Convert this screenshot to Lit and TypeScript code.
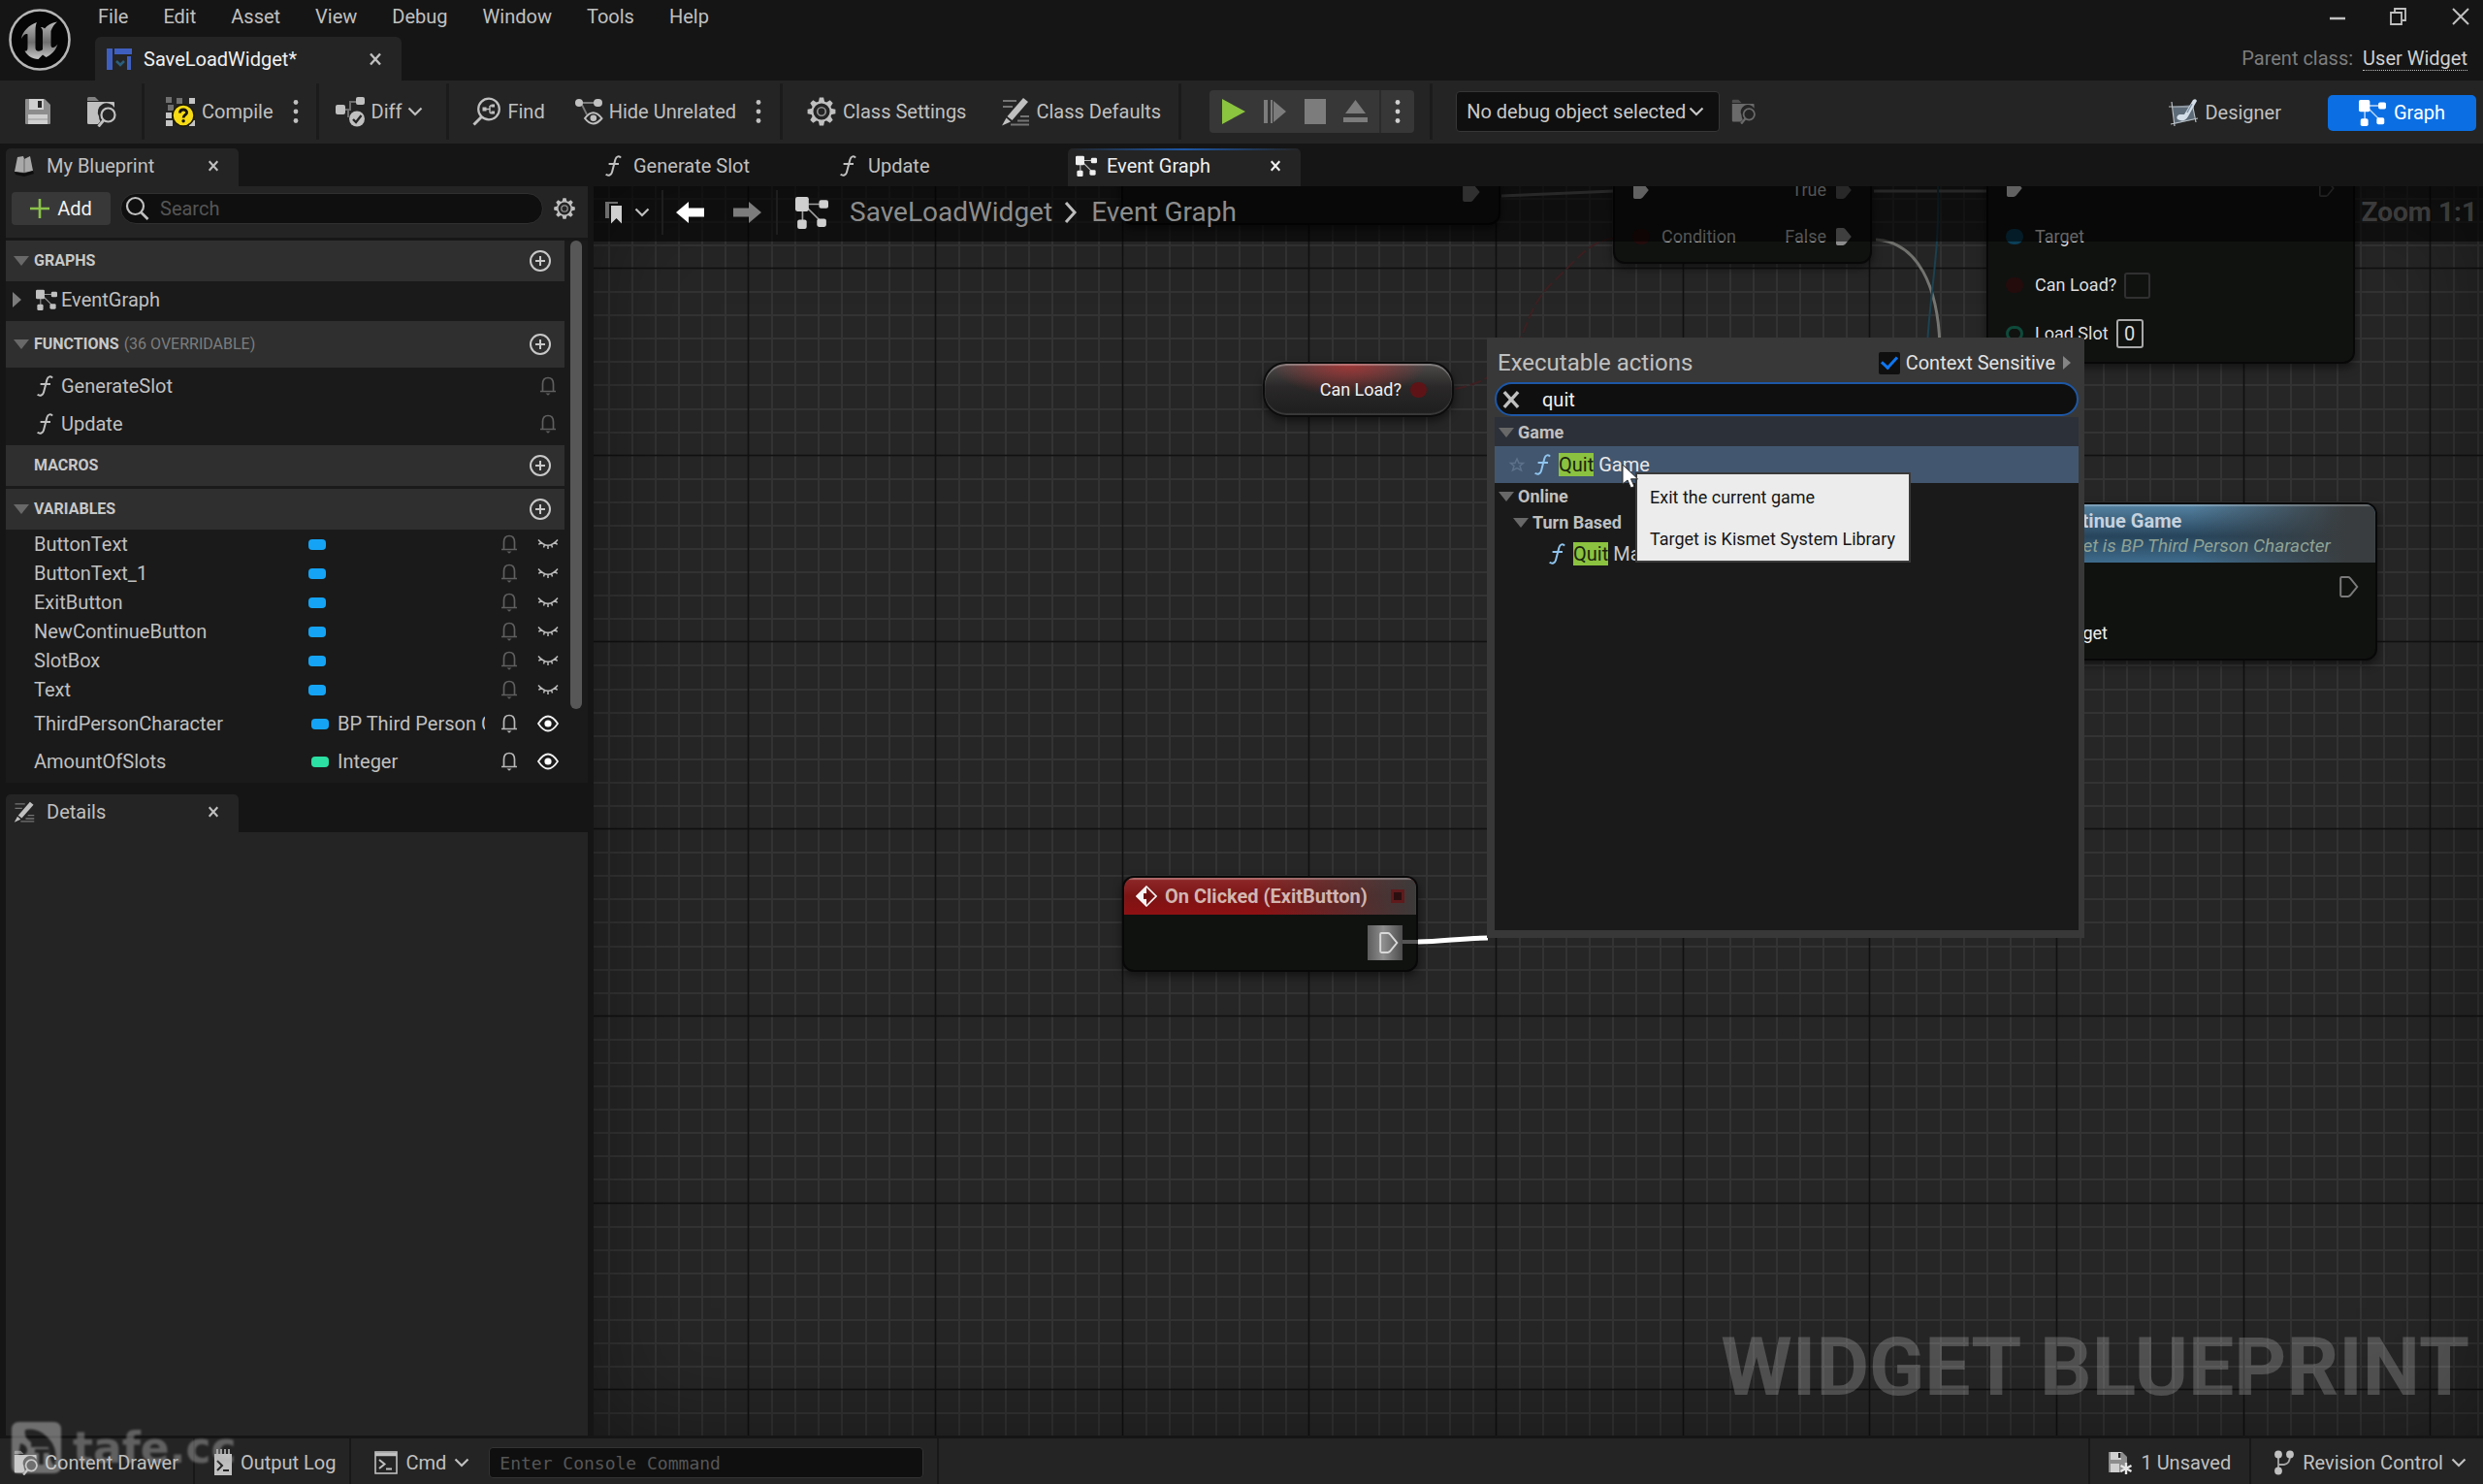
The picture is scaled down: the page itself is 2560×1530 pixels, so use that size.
import { LitElement, html, css, svg, nothing } from "lit";
import { customElement } from "lit/decorators.js";

/* ---------- icons ---------- */
const icon = (w: number, h: number, box: string, body: unknown) =>
  html`<svg width=${w} height=${h} viewBox=${box} fill="none" aria-hidden="true">${body}</svg>`;

const close = (s = 14) =>
  icon(s, s, "0 0 14 14", svg`<path d="M2 1.5L12 12.5M12 1.5L2 12.5" stroke="currentColor" stroke-width="2.4"/>`);

const chevron = () =>
  icon(16, 10, "0 0 16 10", svg`<path d="M1.5 1.5L8 8L14.5 1.5" stroke="currentColor" stroke-width="2.2"/>`);

const dots = () =>
  icon(6, 26, "0 0 6 26", svg`<g fill="currentColor"><circle cx="3" cy="3.5" r="2.4"/><circle cx="3" cy="13" r="2.4"/><circle cx="3" cy="22.5" r="2.4"/></g>`);

const graphIcon = (s: number) =>
  icon(s, s, "0 0 32 32", svg`
    <path d="M8 8H26M7 8V27M8 8L26 26" stroke="currentColor" stroke-width="1.6" opacity=".75"/>
    <g fill="currentColor"><rect x="0" y="1" width="13" height="14" rx="2"/><rect x="23" y="4" width="9" height="8" rx="2"/>
    <rect x="2" y="23" width="9" height="9" rx="2"/><rect x="21" y="22" width="9" height="8" rx="2"/></g>`);

const fnIcon = () =>
  icon(18, 24, "0 0 18 24", svg`
    <path d="M17 3.6C15.6 1.4 12.4 1.8 11.4 5.6L8 18.4C7.2 21.4 4.4 22.8 1.6 20.8" stroke="currentColor" stroke-width="2"/>
    <path d="M4.6 10H15" stroke="currentColor" stroke-width="2"/>`);

const saveIcon = () =>
  icon(28, 28, "0 0 28 28", svg`
    <path d="M1 2Q1 1 2 1H21L27 7V26Q27 27 26 27H2Q1 27 1 26Z" fill="#8d8d8d"/>
    <path d="M5 1H20V12H5Z" fill="#cfcfcf"/><rect x="14" y="3" width="4" height="7" fill="#242424"/>
    <rect x="4" y="17" width="20" height="10" fill="#cfcfcf"/><path d="M4 22H24" stroke="#9a9a9a"/>`);

const browseIcon = (s: number) =>
  icon(s, s, "0 0 32 32", svg`
    <path d="M1 5V2.5Q1 1 2.500 1H9L13 5Z" fill="currentColor" opacity=".6"/>
    <path d="M1 6H28Q29 6 29 7V12A9 9 0 0 0 13 21Q13 24 14.500 26L12 29H2.500Q1 29 1 27.500Z" fill="currentColor"/>
    <circle cx="22.500" cy="19.500" r="7" stroke="currentColor" stroke-width="2.200"/>
    <path d="M17.800 25L12.500 31.500" stroke="currentColor" stroke-width="2.800"/>`);

const compileIcon = () =>
  icon(32, 32, "0 0 32 32", svg`
    <g fill="#c4c4c4"><rect x="25" y="2" width="6" height="6"/><rect x="1" y="17" width="6" height="6"/><rect x="1" y="25" width="7" height="6"/><rect x="25" y="25" width="6" height="6"/></g>
    <g fill="#6f6f6f"><rect x="1" y="1" width="6" height="6"/><rect x="12" y="2" width="6" height="6"/><rect x="3" y="9" width="6" height="6"/></g>
    <circle cx="19" cy="20" r="11" fill="#f7dc15" stroke="#1d1a05" stroke-width="1.500"/>
    <path d="M15.500 17.500C15.500 12.800 22.800 12.900 22.600 17.300C22.500 19.500 19.100 19.600 19.100 22.600" stroke="#17150a" stroke-width="2.800"/>
    <circle cx="19.100" cy="25.800" r="1.700" fill="#17150a"/>`);

const diffIcon = () =>
  icon(32, 32, "0 0 32 32", svg`
    <path d="M8 14H16V6H24M14 14V22" stroke="#6d6d6d" stroke-width="2"/>
    <g fill="currentColor"><rect x="1" y="9" width="10" height="10" rx="2"/><rect x="22" y="1" width="9" height="8" rx="2"/><circle cx="23" cy="23.500" r="8"/></g>
    <path d="M19 24L22 27L27.500 20" stroke="#242424" stroke-width="2.400"/>`);

const findIcon = () =>
  icon(30, 30, "0 0 30 30", svg`
    <circle cx="17" cy="12.500" r="10.800" stroke="currentColor" stroke-width="2.200"/>
    <path d="M9.500 20.500L1.500 28.500" stroke="currentColor" stroke-width="3"/>
    <path d="M14 12.500H18M18 9V16.500M18 9H21M18 16.500H21" stroke="currentColor" stroke-width="1.400"/>
    <g fill="currentColor"><rect x="10.500" y="10.500" width="4" height="4"/><rect x="19.500" y="7.500" width="3.500" height="3"/><rect x="19.500" y="14.500" width="3.500" height="3"/></g>`);

const hideIcon = () =>
  icon(30, 30, "0 0 30 30", svg`
    <path d="M5 6H24M8 8L13 18" stroke="#7b7b7b" stroke-width="1.800"/>
    <rect x="1" y="2" width="8" height="8" rx="4" fill="currentColor"/><rect x="20" y="2" width="9" height="8" rx="4" fill="currentColor"/>
    <path d="M11 22Q19.500 10.500 28.500 22Q19.500 33 11 22Z" stroke="currentColor" stroke-width="2"/><circle cx="19.800" cy="21.700" r="3.300" fill="currentColor"/>`);

const gearIcon = (s: number) =>
  icon(s, s, "0 0 30 30", svg`
    ${[0, 45, 90, 135, 180, 225, 270, 315].map(a => svg`<path d="M13 1.500H17L18 6H12Z" fill="currentColor" transform=${`rotate(${a} 15 15)`}/>`)}
    <circle cx="15" cy="15" r="9" stroke="currentColor" stroke-width="2"/><circle cx="15" cy="15" r="4" stroke="currentColor" stroke-width="1.600" opacity=".7"/>`);

const pencilIcon = (s: number) =>
  icon(s, s, "0 0 30 30", svg`
    <path d="M2 4H16M2 10H12M20 20H29M17 24.500H29M10 28.500H29" stroke="#747474" stroke-width="1.800"/>
    <path d="M23 1L28 5L11.500 24L6.500 20Z" fill="currentColor"/><path d="M5.500 21.500L10 25.500L1 29.500Z" fill="currentColor"/>`);

const designerIcon = () =>
  icon(32, 30, "0 0 32 30", svg`
    <path d="M5 9L25 7L28 22L7 27Z" fill="#5d6b78"/><path d="M1 9H27M4 4L7 29M25 5L29 25M3 27L31 21" stroke="#b9c0c6" stroke-width="1.200"/>
    <path d="M17 17L26 2Q29 0 30 3L21 19Q17 26 10 22Q8 19 12 17Z" fill="#d3dee8"/><path d="M25 6L20 15" stroke="#8295a8" stroke-width="1.500"/>`);

const bookIcon = () =>
  icon(22, 24, "0 0 22 24", svg`
    <path d="M1 18L4 3L10 2L11 5L17 2L20 17L11 19Z" fill="#a9a9a9"/><path d="M11 5V19" stroke="#666"/>
    <path d="M1 18L11 20L20 17L21 20L11 23L2 21Z" fill="#0d0d0d"/>`);

const searchIcon = () =>
  icon(26, 26, "0 0 26 26", svg`<circle cx="10.500" cy="10.500" r="8.500" stroke="currentColor" stroke-width="2.200"/><path d="M16.500 17L23.500 24" stroke="currentColor" stroke-width="2.600"/>`);

const addIcon = () =>
  icon(20, 20, "0 0 20 20", svg`<path d="M10 0V20M0 10H20" stroke="#8bc24a" stroke-width="2.600"/>`);

const plusCircle = () =>
  icon(24, 24, "0 0 24 24", svg`<circle cx="12" cy="12" r="10" stroke="currentColor" stroke-width="2"/><path d="M12 7V17M7 12H17" stroke="currentColor" stroke-width="2"/>`);

const triDown = () => icon(16, 12, "0 0 16 12", svg`<path d="M0 1H16L8 11Z" fill="#686868"/>`);
const triRight = () => icon(10, 16, "0 0 10 16", svg`<path d="M0 0L9 8L0 16Z" fill="#7c7c7c"/>`);

const bell = () =>
  icon(18, 20, "0 0 18 20", svg`<path d="M1 15.500H17M3.500 15V8Q3.500 1.500 9 1.500T14.500 8V15" stroke="currentColor" stroke-width="1.700"/><path d="M6.500 17.500H11.500L9 19.800Z" fill="currentColor"/>`);

const eyeOpen = () =>
  icon(22, 18, "0 0 22 18", svg`<path d="M1 9Q11 -6 21 9Q11 24 1 9Z" stroke="#f2f2f2" stroke-width="1.800"/><circle cx="11" cy="9" r="3.600" fill="#fff"/>`);

const eyeShut = () =>
  icon(22, 12, "0 0 22 12", svg`<path d="M1 1.500Q11 13 21 1.500M3.500 4L1.500 6.500M7.500 6.500L6.500 9.500M11 7.500V11M14.500 6.500L15.500 9.500M18.500 4L20.500 6.500" stroke="#bdbdbd" stroke-width="1.500"/>`);

const bookmarkIcon = () =>
  icon(18, 24, "0 0 18 24", svg`<path d="M0 18V1H13V3H4V18Z" fill="#6d6d6d"/><path d="M6 5H17V23.500L11.500 18L6 23.500Z" fill="#cfcfcf"/>`);

const arrow = (flip: boolean) =>
  icon(30, 22, "0 0 30 22", svg`<path transform=${flip ? "translate(30 0) scale(-1 1)" : ""} d="M0 11L13 0V6.500H29V15.500H13V22Z" fill="currentColor"/>`);

const crumbSep = () => icon(14, 22, "0 0 14 22", svg`<path d="M2 1L11 11L2 21" stroke="#bdbdbd" stroke-width="3"/>`);

const execPin = (filled: boolean, color: string, s = 18) =>
  icon(s, s, "0 0 18 20", svg`<path d="M2 1H8Q9 1 10 2L16.500 10L10 18Q9 19 8 19H2Q1 19 1 18V2Q1 1 2 1Z" fill=${filled ? color : "none"} stroke=${color} stroke-width="1.800"/>`);

const logIcon = () =>
  icon(20, 28, "0 0 20 28", svg`<path d="M1 5H19V27H1Z" fill="currentColor"/><path d="M4 0V6M8 0V6M12 0V6M16 0V6" stroke="currentColor" stroke-width="1.600"/><path d="M4 12L9 17L4 22M10 22H16" stroke="#242424" stroke-width="2"/>`);

const cmdIcon = () =>
  icon(24, 24, "0 0 24 24", svg`<rect x="1" y="1" width="22" height="22" stroke="currentColor" stroke-width="1.600"/><path d="M1 3.500H23" stroke="currentColor" stroke-width="3.500"/><path d="M5 9L10.500 13.500L5 18M12 18.500H18" stroke="currentColor" stroke-width="2"/>`);

const unsavedIcon = () =>
  icon(26, 26, "0 0 26 26", svg`
    <path d="M1 2H15L20 7V16L14 23H1Z" fill="#8d8d8d"/><rect x="3" y="2" width="11" height="8" fill="#d0d0d0"/><rect x="11" y="3" width="2.500" height="5" fill="#242424"/><rect x="3" y="14" width="9" height="9" fill="#d0d0d0"/>
    <path d="M19 13V25M13.500 16L24.500 22M24.500 16L13.500 22" stroke="#e6e6e6" stroke-width="2.400"/>`);

const branchIcon = () =>
  icon(22, 26, "0 0 22 26", svg`<path d="M5 5V22M5 15H11Q17 14 17 6" stroke="#a6a6a6" stroke-width="1.800"/><g fill="currentColor"><circle cx="5" cy="4.500" r="3.900"/><circle cx="17" cy="4.500" r="3.900"/><circle cx="5" cy="21.500" r="3.900"/></g>`);

const widgetIcon = () =>
  icon(26, 22, "0 0 26 22", svg`<g fill="#3f5fc0"><rect x="0" y="0" width="6" height="22"/><rect x="8" y="0" width="18" height="6"/><rect x="21" y="8" width="4" height="14"/></g><path d="M10 13L14 17L18 13" stroke="#2b5f7d" stroke-width="2.500"/>`);

const unrealLogo = () =>
  icon(66, 66, "0 0 66 66", svg`
    <defs><linearGradient id="ug" x1="0" y1="0" x2="0" y2="1"><stop offset="0" stop-color="#b8b8b8"/><stop offset=".55" stop-color="#6d6d6d"/><stop offset="1" stop-color="#c9c9c9"/></linearGradient></defs>
    <circle cx="33" cy="33" r="30.500" fill="#060606" stroke="#b5b5b5" stroke-width="2.600"/>
    <path fill="url(#ug)" d="M30 15C22 18 15 24 14 32C16 28 19 26 20.500 27.500V41C20.500 44 19.500 45 17.500 44.500C20 49.500 25 52.500 31.500 53L36 48.500L39.500 51C45 48.500 49.500 44 51.500 37.500C49.500 40 47.500 41.500 46 41C44.500 40.500 44.500 39 44.500 37.500V24C46 19.500 48.500 16.500 51 14.500C45 15.500 41 18 38 21.500C37 20.500 36 20 34 20C35.500 21.500 36 23 36 25V43C33.500 45.500 28.500 45.500 28.500 41.500V23.500C28.500 19.500 29 17 30 15Z"/>`);

/* ---------- data ---------- */
const MENUS = ["File", "Edit", "Asset", "View", "Debug", "Window", "Tools", "Help"];
const VARS = [
  { name: "ButtonText" }, { name: "ButtonText_1" }, { name: "ExitButton" },
  { name: "NewContinueButton" }, { name: "SlotBox" }, { name: "Text" },
  { name: "ThirdPersonCharacter", type: "BP Third Person Character", color: "#15a4f5" },
  { name: "AmountOfSlots", type: "Integer", color: "#2be0a2" },
];

/* ---------- shared styles ---------- */
const base = css`
  * { box-sizing: border-box; }
  :host { font: 20px/24px Roboto, "Liberation Sans", sans-serif; color: #c0c0c0; }
  button, input, select { font: inherit; color: inherit; background: none; border: 0; padding: 0; margin: 0; outline: 0; }
  button { display: inline-flex; align-items: center; white-space: nowrap; }
  svg { display: block; flex: none; }
  ul { list-style: none; margin: 0; padding: 0; }
`;

@customElement("top-bar")
class TopBar extends LitElement {
  static styles = [base, css`
    :host { display: block; }
    .title { display: flex; height: 83px; background: #151515; }
    .logo { width: 98px; padding: 8px; }
    .mid { flex: 1; display: flex; flex-direction: column; justify-content: space-between; }
    .menu { display: flex; gap: 36px; padding: 5px 3px; }
    .tab { display: flex; align-items: center; width: 316px; height: 45px; padding: 0 20px 0 12px; background: #242424; border-radius: 6px 6px 0 0; color: #f0f0f0; gap: 12px; }
    .tab span { flex: 1; }
    .tab button { color: #c0c0c0; }
    .win { display: flex; flex-direction: column; align-items: flex-end; justify-content: space-between; padding: 8px 14px 10px 0; }
    .ctl { display: flex; gap: 46px; align-items: center; }
    .parent { color: #7d7d7d; display: flex; gap: 10px; padding-right: 2px; }
    .parent a { color: #d0d0d0; text-decoration: none; border-bottom: 1px dotted #c0c0c0; }
    .bar { display: flex; align-items: stretch; height: 65px; padding: 3px 7px 0 0; background: #242424; }
    .grp { display: flex; align-items: center; border-right: 3px solid #1b1b1b; margin: 0 0 4px; }
    .g1 { gap: 36px; padding: 0 25px 0 25px; }
    .g2 { gap: 20px; padding: 0 18px 0 21px; }
    .g3 { padding: 0 24px 0 16px; }
    .g4 { gap: 20px; padding: 0 19px 0 24px; }
    .g4 .find { margin-right: 10px; }
    .g5 { gap: 36px; padding: 0 18px 0 24px; }
    .g6 { padding: 0 16px 0 29px; }
    .g7 { padding: 0 26px 0 24px; gap: 12px; border: 0; color: #6a6a6a; }
    .ib { gap: 6px; }
    .play { display: flex; align-items: center; background: #373737; border-radius: 4px; height: 44px; color: #7c7c7c; padding-left: 12px; gap: 18px; }
    .play .more { height: 44px; padding: 0 14px; border-left: 2px solid #2b2b2b; color: #d0d0d0; margin-left: -6px; }
    .pick { position: relative; display: flex; align-items: center; color: #c8c8c8; }
    .pick select { appearance: none; width: 272px; height: 42px; background: #0f0f0f; border: 1px solid #363636; border-radius: 4px; padding: 0 24px 0 10px; }
    .pick svg { position: absolute; right: 16px; pointer-events: none; }
    .modes { margin-left: auto; display: flex; align-items: center; gap: 48px; padding-bottom: 2px; }
    .on { height: 37px; width: 153px; justify-content: center; gap: 8px; background: #0b6fe3; border-radius: 5px; color: #fff; }
  `];
  render() {
    return html`
      <header class="title">
        <div class="logo">${unrealLogo()}</div>
        <div class="mid">
          <nav class="menu">${MENUS.map(m => html`<button>${m}</button>`)}</nav>
          <div class="tab">${widgetIcon()}<span>SaveLoadWidget*</span><button aria-label="Close tab">${close()}</button></div>
        </div>
        <div class="win">
          <div class="ctl">
            <button aria-label="Minimize">${icon(16, 18, "0 0 16 18", svg`<path d="M0 11H16" stroke="currentColor" stroke-width="2.500"/>`)}</button>
            <button aria-label="Restore">${icon(18, 18, "0 0 18 18", svg`<path d="M1 5H12V17H1ZM5 4V1H16V13H13" stroke="currentColor" stroke-width="1.800"/>`)}</button>
            <button aria-label="Close">${icon(18, 18, "0 0 18 18", svg`<path d="M1 1L17 17M17 1L1 17" stroke="currentColor" stroke-width="2"/>`)}</button>
          </div>
          <div class="parent"><span>Parent class:</span><a href="#">User Widget</a></div>
        </div>
      </header>
      <div class="bar">
        <div class="grp g1"><button aria-label="Save">${saveIcon()}</button><button aria-label="Browse">${browseIcon(32)}</button></div>
        <div class="grp g2"><button class="ib">${compileIcon()}Compile</button><button aria-label="Compile options">${dots()}</button></div>
        <div class="grp g3"><button class="ib">${diffIcon()}Diff${chevron()}</button></div>
        <div class="grp g4"><button class="ib find">${findIcon()}Find</button><button class="ib">${hideIcon()}Hide Unrelated</button><button aria-label="Hide options">${dots()}</button></div>
        <div class="grp g5"><button class="ib">${gearIcon(32)}Class Settings</button><button class="ib">${pencilIcon(30)}Class Defaults</button></div>
        <div class="grp g6"><div class="play">
          <button aria-label="Play">${icon(26, 28, "0 0 26 28", svg`<path d="M1 1L25 14L1 27Z" fill="#8bc43f"/>`)}</button>
          <button aria-label="Step">${icon(24, 26, "0 0 24 26", svg`<path d="M0 1H4V25H0ZM7 1H9V25H7ZM10 2L23 13L10 24Z" fill="currentColor"/>`)}</button>
          <button aria-label="Stop">${icon(22, 26, "0 0 22 26", svg`<rect width="22" height="26" fill="currentColor"/>`)}</button>
          <button aria-label="Eject">${icon(25, 26, "0 0 25 26", svg`<path d="M12.500 1L23 15H2ZM0 19H25V24H0Z" fill="currentColor"/>`)}</button>
          <button class="more" aria-label="Play options">${dots()}</button>
        </div></div>
        <div class="grp g7">
          <div class="pick"><select aria-label="Debug object"><option>No debug object selected</option></select>${chevron()}</div>
          <button aria-label="Locate">${browseIcon(26)}</button>
        </div>
        <div class="modes"><button class="ib">${designerIcon()}Designer</button><button class="on">${graphIcon(28)}Graph</button></div>
      </div>`;
  }
}

@customElement("blueprint-panel")
class BlueprintPanel extends LitElement {
  static styles = [base, css`
    :host { display: flex; flex-direction: column; }
    .tab { display: flex; align-items: center; width: 240px; height: 39px; padding: 0 20px 3px 8px; background: #242424; border-radius: 5px 5px 0 0; gap: 12px; }
    .tab span { flex: 1; }
    .find { display: flex; align-items: center; gap: 10px; height: 53px; padding: 0 12px 8px 6px; background: #242424; }
    .add { width: 102px; height: 34px; justify-content: center; gap: 8px; background: #383838; border-radius: 4px; color: #f0f0f0; }
    .box { flex: 1; display: flex; align-items: center; gap: 10px; height: 32px; padding: 0 4px; border-radius: 16px; background: #0f0f0f; border: 1px solid #303030; }
    .box input { flex: 1; min-width: 0; }
    .box input::placeholder { color: #555; opacity: 1; }
    .scroll { display: flex; background: #1a1a1a; height: 562px; border-top: 3px solid #171717; }
    .list { flex: 1; min-width: 0; }
    .thumb { width: 12px; height: 483px; margin: 0 6px; border-radius: 6px; background: #575757; }
    .head { display: flex; align-items: center; height: 42px; padding: 0 13px 0 8px; background: #2f2f2f; font-size: 16px; color: #7d7d7d; gap: 5px; }
    .head b { color: #c8c8c8; }
    .head button { margin-left: auto; color: #c8c8c8; }
    .head.tall { height: 48px; }
    .head.bare { padding-left: 29px; }
    .macro { padding: 2px 0 3px; }
    .row { display: flex; align-items: center; height: 39px; padding: 0 8px 2px 31px; gap: 8px; }
    .row.ev { padding: 0 8px 3px 7px; height: 41px; gap: 4px; }
    .ev .gap { width: 6px; }
    .row .name { flex: 1; }
    .bell { color: #5f5f5f; }
    .var { display: grid; grid-template-columns: 283px 182px 16px 18px 20px 22px; align-items: center; height: 30px; padding-left: 29px; }
    .var.typed { height: 39px; padding-top: 1px; }
    .var .bell { grid-column: 4; }
    .var .eye { grid-column: 6; }
    .kind { display: flex; align-items: center; gap: 9px; overflow: hidden; white-space: nowrap; }
    .typed .kind { padding-left: 3px; }
    .pill { flex: none; width: 18px; height: 11px; border-radius: 4px; background: #15a4f5; }
    .typed .bell { color: #b8b8b8; }
    .details { margin-top: 12px; flex: 1; display: flex; flex-direction: column; }
    .body { flex: 1; background: #242424; }
  `];
  head(name: string, cls = "", note = "", open = true) {
    return html`<div class="head ${cls}">${open ? triDown() : nothing}<b>${name}</b>${note ? html`<span>${note}</span>` : nothing}<button aria-label="Add ${name}">${plusCircle()}</button></div>`;
  }
  render() {
    return html`
      <div class="tab">${bookIcon()}<span>My Blueprint</span><button aria-label="Close">${close(12)}</button></div>
      <div class="find">
        <button class="add">${addIcon()}Add</button>
        <label class="box">${searchIcon()}<input placeholder="Search" aria-label="Search blueprint"></label>
        <button aria-label="Settings">${gearIcon(24)}</button>
      </div>
      <div class="scroll">
        <div class="list">
          ${this.head("GRAPHS")}
          <div class="row ev">${triRight()}<i class="gap"></i>${graphIcon(22)}<span>EventGraph</span></div>
          ${this.head("FUNCTIONS", "tall", "(36 OVERRIDABLE)")}
          ${["GenerateSlot", "Update"].map(n => html`<div class="row">${fnIcon()}<span class="name">${n}</span><span class="bell">${bell()}</span></div>`)}
          <div class="macro">${this.head("MACROS", "bare", "", false)}</div>
          ${this.head("VARIABLES")}
          <ul>${VARS.map(v => html`<li class="var ${v.type ? "typed" : ""}"><span>${v.name}</span>
            <span class="kind"><i class="pill" style=${v.color ? `background:${v.color}` : ""}></i>${v.type ?? ""}</span>
            <span class="bell">${bell()}</span><span class="eye">${v.type ? eyeOpen() : eyeShut()}</span></li>`)}</ul>
        </div>
        <div class="thumb"></div>
      </div>
      <section class="details">
        <div class="tab">${pencilIcon(22)}<span>Details</span><button aria-label="Close">${close(12)}</button></div>
        <div class="body"></div>
      </section>`;
  }
}

@customElement("action-menu")
class ActionMenu extends LitElement {
  static styles = [base, css`
    :host { display: flex; flex-direction: column; background: #383838; padding: 8px 6px 8px 8px; }
    .top { display: flex; align-items: center; height: 38px; padding: 0 7px 2px 3px; }
    .top h2 { font-size: 24px; font-weight: 400; margin: 0; flex: 1; }
    .ctx { display: flex; align-items: center; gap: 6px; color: #e2e2e2; margin-right: 8px; }
    .ctx input { appearance: none; width: 22px; height: 23px; background: #0f0f0f; display: grid; place-items: center; border-radius: 2px; }
    .ctx input:checked::after { content: ""; width: 7px; height: 13px; border: solid #0f76f0; border-width: 0 3px 3px 0; transform: rotate(42deg); margin-top: -4px; }
    .box { display: flex; align-items: center; gap: 22px; height: 35px; border: 2px solid #1d57a6; border-radius: 18px; background: #0f0f0f; padding: 0 5px; }
    .box input { flex: 1; color: #f0f0f0; }
    .list { flex: 1; background: #1a1a1a; margin-top: 1px; }
    .cat { display: flex; align-items: center; gap: 4px; height: 27px; padding-left: 4px; font-size: 18px; font-weight: 700; }
    .cat.first { background: #2c3038; height: 30px; padding-top: 2px; }
    .sub { padding-left: 19px; }
    .act { display: flex; align-items: center; height: 38px; color: #c8c8c8; padding-left: 55px; }
    .act svg { color: #8fc4ee; margin-right: 8px; }
    .act.sel { background: #42566f; color: #e8e8e8; padding-left: 14px; }
    mark { background: #8bc240; color: #1a2410; margin-right: 5px; line-height: 24px; }
  `];
  render() {
    return html`
      <div class="top"><h2>Executable actions</h2><label class="ctx"><input type="checkbox" checked>Context Sensitive</label>${icon(9, 16, "0 0 9 16", svg`<path d="M0 1L8 8L0 15Z" fill="#858585"/>`)}</div>
      <label class="box"><button aria-label="Clear">${close(20)}</button><input value="quit" aria-label="Search actions"></label>
      <div class="list">
        <div class="cat first">${triDown()}Game</div>
        <div class="act sel">${icon(18, 18, "0 0 18 18", svg`<path d="M9 3L11 7.500H15.500L12 10.500L13.500 15L9 12.500L4.500 15L6 10.500L2.500 7.500H7Z" stroke="#5d718b" stroke-width="1.500"/>`)}${fnIcon()}<mark>Quit</mark>Game</div>
        <div class="cat">${triDown()}Online</div>
        <div class="cat sub">${triDown()}Turn Based</div>
        <div class="act">${fnIcon()}<mark>Quit</mark>Match</div>
      </div>`;
  }
}

@customElement("graph-canvas")
class GraphCanvas extends LitElement {
  static styles = [base, css`
    :host { display: block; position: relative; overflow: hidden; background: #262626; }
    .layer { position: absolute; left: 0; top: 0; width: 100%; height: 100%; }
    .shade { position: absolute; inset: 0; box-shadow: inset 0 0 110px rgba(0,0,0,.4); pointer-events: none; }
    .mark { position: absolute; right: 14px; bottom: 20px; font: 700 84px/100px Roboto, sans-serif; color: rgba(255,255,255,.2); white-space: nowrap; }
    .node { position: absolute; background: #101210; border-radius: 12px; border: 2px solid #080808; box-shadow: 0 4px 10px rgba(0,0,0,.5); font-size: 18px; color: #dedede; overflow: hidden; }
    .pins { display: flex; flex-direction: column; justify-content: flex-end; }
    .pin { display: flex; align-items: center; gap: 12px; padding: 0 18px; flex: none; }
    .end { margin-left: auto; }
    .out { margin-left: auto; display: flex; align-items: center; gap: 9px; }
    .n1 { left: 544px; top: -80px; width: 391px; height: 120px; }
    .n1 .pin { height: 64px; }
    .n2 { left: 1051px; top: -60px; width: 267px; height: 140px; padding-bottom: 2px; }
    .n2 .pin { height: 48px; color: #b8b8b8; }
    .n3 { left: 1436px; top: -60px; width: 380px; height: 243px; padding-bottom: 4px; }
    .n3 .pin { height: 50px; }
    .dot { width: 18px; height: 16px; border-radius: 8px; }
    .red { background: #240c0c; } .teal { background: #0b3f57; }
    .ring { border: 3px solid #0e4a3a; }
    .chk { appearance: none; width: 27px; height: 27px; border: 2px solid #303030; border-radius: 3px; margin-left: -4px; }
    .num { width: 28px; height: 30px; border: 2px solid #a8a8a8; border-radius: 3px; text-align: center; margin-left: -4px; font-size: 20px; }
    .pill { left: 690px; top: 181px; width: 197px; height: 57px; border-radius: 24px; display: flex; align-items: center; justify-content: flex-end; gap: 9px; padding-right: 26px; border-color: #0c0c0c;
      background: radial-gradient(ellipse 80px 34px at 45% 0, rgba(190,50,50,.75), transparent), linear-gradient(#4e4a4a 0, #2a2828 45%, #1e1e1e 100%); box-shadow: inset 0 2px 1px rgba(255,255,255,.3), inset 0 -2px 1px rgba(255,255,255,.12), 0 4px 8px rgba(0,0,0,.5); color: #f0f0f0; }
    .pill .dot { background: #5e1416; width: 17px; }
    .bar { display: flex; align-items: center; font-size: 20px; font-weight: 700; }
    .ev { left: 545px; top: 711px; width: 305px; height: 99px; }
    .ev .bar { height: 38px; padding: 0 12px; gap: 8px; color: #d3b5b0; background: linear-gradient(90deg, transparent 45%, #3c3a3a), linear-gradient(#8f2a2a, #7c1414 50%, #8f1013); box-shadow: inset 0 2px 1px rgba(255,255,255,.3); }
    .ev .sq { margin-left: auto; width: 14px; height: 14px; border: 3px solid #601a1c; background: #2b0f10; }
    .hot { margin: 11px 14px 0 auto; width: 36px; height: 36px; display: flex; align-items: center; justify-content: flex-end; padding-right: 3px; background: linear-gradient(90deg, #5c5c5c, #8e8e8e 45%, #4c4c4c); }
    .cont { left: 1458px; top: 326px; width: 381px; height: 163px; }
    .cont .hd { height: 60px; padding: 5px 0 0 39px; background: linear-gradient(90deg, transparent 50%, #393d3f 92%), linear-gradient(#5583a3, #27455c 55%, #3f6c8d); box-shadow: inset 0 2px 1px rgba(255,255,255,.25); }
    .cont .bar { height: 24px; color: #c6d2de; }
    .cont em { display: block; font-size: 19px; line-height: 28px; color: #8fa294; white-space: nowrap; }
    .cont .pin { height: 50px; }
    .cont .pin .end { margin-right: -2px; }
    .cont .tgt { padding-left: 50px; height: 46px; color: #f0f0f0; }
    .strip { position: absolute; left: 0; right: 0; top: 0; height: 57px; display: flex; align-items: center; padding: 0 6px 4px 12px; background: rgba(0,0,0,.55); }
    .strip .bm { gap: 12px; padding-right: 12px; height: 46px; border-right: 2px solid #1e1e1e; }
    .strip .nav { display: flex; align-items: center; gap: 28px; padding: 0 15px 0 13px; height: 46px; border-right: 2px solid #1e1e1e; color: #fff; }
    .strip .dim { color: #7c7c7c; }
    .crumbs { display: flex; align-items: center; font-size: 28px; line-height: 32px; color: #8c8c8c; padding-left: 18px; }
    .crumbs button { color: #8c8c8c; }
    .crumbs .gi { color: #cfcfcf; margin-right: 22px; }
    .crumbs .sep { margin: 0 14px 0 12px; }
    .zoom { margin-left: auto; font-size: 28px; font-weight: 700; color: rgba(255,255,255,.2); }
    action-menu { position: absolute; left: 921px; top: 156px; width: 616px; height: 619px; }
    .tip { position: absolute; left: 1074px; top: 295px; width: 284px; height: 93px; background: #ececec; border: 2px solid #3a3a3a; color: #161616; font-size: 18px; line-height: 24px; padding: 12px 13px; display: flex; flex-direction: column; gap: 19px; white-space: nowrap; }
    .cursor { position: absolute; left: 1060px; top: 286px; }
  `];
  grid() {
    const step = 192.7 / 8;
    let minor = "", major = "";
    for (let i = -30; i < 140; i++) {
      const x = Math.round(544.5 + i * step), y = Math.round(84 + i * step);
      if (i % 8 === 0) {
        if (x >= 0) major += `M${x} 0h1v4000h-1z`;
        if (y >= 0) major += `M0 ${y}h6000v1h-6000z`;
      } else {
        if (x >= 0) minor += `M${x} 0h2v4000h-2z`;
        if (y >= 0) minor += `M0 ${y}h6000v2h-6000z`;
      }
    }
    return svg`<path d=${minor} fill="#333333"/><path d=${major} fill="#131313" stroke="#131313" stroke-width=".6"/>`;
  }
  render() {
    return html`
      <svg class="layer">${this.grid()}
        <g transform="translate(-612 -192)" fill="none">
          <path d="M1548 202L1664 197M1932 197H2050" stroke="#6c6c6c" stroke-width="3"/>
          <path d="M1934 247C1978 250 1998 296 2000 356" stroke="#757572" stroke-width="3"/>
          <path d="M1998 192C2000 260 1990 300 1987 356" stroke="#1d4352" stroke-width="2"/>
          <path d="M1500 401C1580 385 1560 330 1600 292S1640 244 1690 244" stroke="#3e2022" stroke-width="2" stroke-dasharray="12 4"/>
        </g>
      </svg>
      <div class="shade"></div>
      <div class="mark">WIDGET BLUEPRINT</div>
      <div class="node pins n1"><div class="pin"><span class="end">${execPin(true, "#6b6b6b", 20)}</span></div></div>
      <div class="node pins n2">
        <div class="pin">${execPin(true, "#d8d8d8")}<span class="out">True ${execPin(true, "#5a5a5a")}</span></div>
        <div class="pin"><i class="dot red"></i>Condition<span class="out">False ${execPin(true, "#8d8d8d")}</span></div>
      </div>
      <div class="node pins n3">
        <div class="pin">${execPin(true, "#d8d8d8")}<span class="end">${execPin(false, "#4a4a4a")}</span></div>
        <div class="pin"><i class="dot teal"></i>Target</div>
        <label class="pin"><i class="dot red"></i>Can Load?<input class="chk" type="checkbox"></label>
        <label class="pin"><i class="dot ring"></i>Load Slot<input class="num" value="0"></label>
      </div>
      <div class="node pill">Can Load?<i class="dot"></i></div>
      <div class="node ev">
        <div class="bar">${icon(22, 22, "0 0 22 22", svg`<path d="M11 1L21 11L11 21L1 11Z" stroke="#f4f4f4" stroke-width="1.600"/><path d="M11 1V8H8V14H11V21L1 11Z" fill="#f4f4f4"/><path d="M8 9H12V6L17 11L12 16V13H8Z" fill="#6b1012"/>`)}On Clicked (ExitButton)<i class="sq"></i></div>
        <div class="hot">${execPin(false, "#d8d8d8", 22)}</div>
      </div>
      <div class="node cont">
        <div class="hd"><div class="bar">Continue Game</div><em>Target is BP Third Person Character</em></div>
        <div class="pin"><span class="end">${execPin(false, "#7a7a7a", 22)}</span></div>
        <div class="pin tgt">Target</div>
      </div>
      <svg class="layer"><path d="M834 779L850 779" stroke="#555" stroke-width="4"/><path d="M850 779C875 779 895 775 922 775" stroke="#fff" stroke-width="5" fill="none"/></svg>
      <div class="strip">
        <button class="bm" aria-label="Bookmarks">${bookmarkIcon()}${chevron()}</button>
        <div class="nav"><button aria-label="Back">${arrow(false)}</button><button class="dim" aria-label="Forward">${arrow(true)}</button></div>
        <div class="crumbs"><span class="gi">${graphIcon(34)}</span><button>SaveLoadWidget</button><span class="sep">${crumbSep()}</span><button>Event Graph</button></div>
        <span class="zoom">Zoom 1:1</span>
      </div>
      <action-menu></action-menu>
      <div class="tip" role="tooltip"><span>Exit the current game</span><span>Target is Kismet System Library</span></div>
      <svg class="cursor" width="20" height="28" viewBox="0 0 20 28"><path d="M1 1V21L6 17L9.500 25L13 23.500L9.500 15.800H16.500Z" fill="#fff" stroke="#2a2a2a" stroke-width="1"/></svg>`;
  }
}

@customElement("status-bar")
class StatusBar extends LitElement {
  static styles = [base, css`
    :host { position: relative; display: flex; height: 47px; background: #242424; }
    .cell { display: flex; align-items: center; padding: 3px 14px 0 19px; border-right: 2px solid #181818; gap: 8px; }
    .cell.first { padding: 3px 15px 0 14px; }
    .cell.first button { gap: 6px; }
    .cell.cmd { padding-left: 24px; }
    .cell button { gap: 8px; }
    .cell input { width: 448px; height: 32px; margin-left: 12px; background: #0f0f0f; border: 1px solid #333; border-radius: 4px; padding: 0 10px; font: 18px/24px "DejaVu Sans Mono", monospace; }
    .cell input::placeholder { color: #565656; opacity: 1; }
    .right { margin-left: auto; display: flex; border-left: 2px solid #181818; }
    .right .cell { padding: 3px 19px 0 18px; }
    .right .cell:last-child { border: 0; padding: 3px 17px 0 23px; }
    .wm { position: absolute; left: 12px; top: -17px; display: flex; align-items: center; gap: 12px; opacity: .42; filter: blur(1px); pointer-events: none; font: 700 44px/52px "DejaVu Sans", sans-serif; color: #b4b4b4; }
  `];
  render() {
    return html`
      <div class="cell first"><button>${browseIcon(26)}Content Drawer</button></div>
      <div class="cell"><button>${logIcon()}Output Log</button></div>
      <div class="cell cmd"><button>${cmdIcon()}Cmd ${chevron()}</button><input placeholder="Enter Console Command" aria-label="Console command"></div>
      <div class="right">
        <div class="cell"><button>${unsavedIcon()}1 Unsaved</button></div>
        <div class="cell"><button>${branchIcon()}Revision Control ${chevron()}</button></div>
      </div>
      <div class="wm">${icon(51, 53, "0 0 51 53", svg`<path fill-rule="evenodd" fill="#d8d8d8" d="M8 0H43Q51 0 51 8V45Q51 53 43 53H8Q0 53 0 45V8Q0 0 8 0ZM14 8Q30 5 42 22Q48 32 44 46Q38 38 38 26H20V21Q12 16 14 8ZM9 22Q17 24 16 31Q13 36 7 35ZM24 28H38V32H33V44H28V32H24Z"/>`)}<span>tafe.cc</span></div>`;
  }
}

@customElement("app-root")
class AppRoot extends LitElement {
  static styles = [base, css`
    :host { display: flex; flex-direction: column; height: 100vh; background: #151515; overflow: hidden; }
    main { flex: 1; min-height: 0; display: flex; gap: 6px; padding: 5px 0 3px 6px; }
    blueprint-panel { width: 600px; flex: none; }
    .work { flex: 1; min-width: 0; display: flex; flex-direction: column; }
    .tabs { display: flex; gap: 2px; padding-left: 5px; height: 39px; }
    .tab { display: flex; align-items: center; gap: 12px; width: 240px; padding: 0 20px 3px 6px; border-radius: 5px 5px 0 0; }
    .tab.on { background: linear-gradient(90deg, transparent, #1d57a6 50%, transparent) top / 100% 2px no-repeat #242424; color: #f0f0f0; gap: 10px; padding-left: 8px; }
    .tab span { flex: 1; }
    graph-canvas { flex: 1; }
  `];
  render() {
    return html`
      <top-bar></top-bar>
      <main>
        <blueprint-panel></blueprint-panel>
        <div class="work">
          <div class="tabs">
            <div class="tab">${fnIcon()}<span>Generate Slot</span></div>
            <div class="tab">${fnIcon()}<span>Update</span></div>
            <div class="tab on">${graphIcon(22)}<span>Event Graph</span><button aria-label="Close">${close(12)}</button></div>
          </div>
          <graph-canvas></graph-canvas>
        </div>
      </main>
      <status-bar></status-bar>`;
  }
}
